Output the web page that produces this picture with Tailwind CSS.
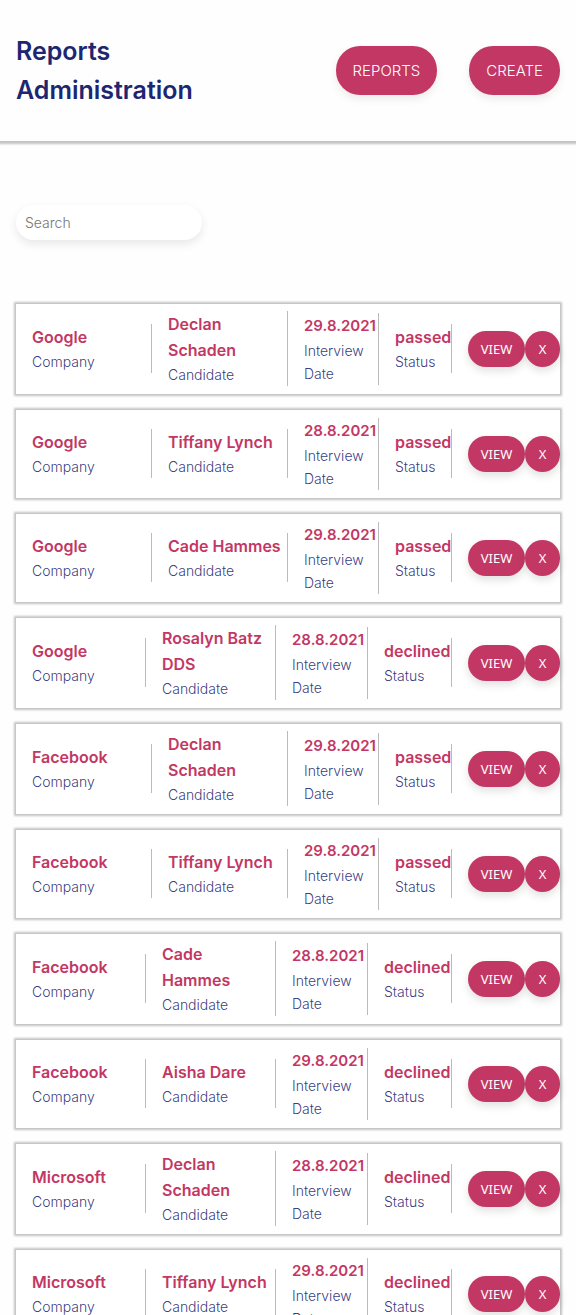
<!DOCTYPE html>
<html lang="en">
<head>
<meta charset="utf-8">
<meta name="viewport" content="width=device-width, initial-scale=1">
<title>Reports Administration</title>
<script src="https://cdn.jsdelivr.net/npm/@tailwindcss/browser@4"></script>
</head>
<body class="bg-[#fefefe] font-['Inter',sans-serif] font-light text-[#1d2671]">
<header class="flex min-h-[141px] items-center justify-between gap-4 px-4 shadow-[0_1px_2px_2px_#c4c4c4]">
  <h1 class="text-[25px]/[39px] font-semibold">Reports<br>Administration</h1>
  <nav class="flex gap-8">
    <a href="#reports" class="rounded-[24px] bg-[#c33764] px-[17px] py-3 text-[15px]/[25px] text-white shadow-[0_4px_8px_rgba(0,0,0,0.08)]">REPORTS</a>
    <a href="#create" class="rounded-[24px] bg-[#c33764] px-[17px] py-3 text-[15px]/[25px] text-white shadow-[0_4px_8px_rgba(0,0,0,0.08)]">CREATE</a>
  </nav>
</header>
<main class="px-4 pt-16">
  <input type="search" aria-label="Search" placeholder="Search" class="block h-[35px] w-[186px] rounded-full bg-white px-[9px] text-sm font-light placeholder:text-[#757575] shadow-[0_4px_10px_rgba(0,0,0,0.09)]">
  <ul id="reports" class="mt-16 flex flex-col gap-4 pb-4"></ul>
</main>
<script>
const reports = [
  ['Google', 'Declan Schaden', '29.8.2021', 'passed'],
  ['Google', 'Tiffany Lynch', '28.8.2021', 'passed'],
  ['Google', 'Cade Hammes', '29.8.2021', 'passed'],
  ['Google', 'Rosalyn Batz DDS', '28.8.2021', 'declined'],
  ['Facebook', 'Declan Schaden', '29.8.2021', 'passed'],
  ['Facebook', 'Tiffany Lynch', '29.8.2021', 'passed'],
  ['Facebook', 'Cade Hammes', '28.8.2021', 'declined'],
  ['Facebook', 'Aisha Dare', '29.8.2021', 'declined'],
  ['Microsoft', 'Declan Schaden', '28.8.2021', 'declined'],
  ['Microsoft', 'Tiffany Lynch', '29.8.2021', 'declined'],
];
const columns = {
  passed: 'grid-cols-[1fr_1fr_75px_57px_auto]',
  declined: 'grid-cols-[1fr_1fr_76px_68px_auto]',
};
const cell = (value, label, valueStyle) => `
  <div class="border-r border-[#bbbbbb]">
    <h2 class="${valueStyle} font-semibold text-[#c33764]">${value}</h2>
    <p class="text-sm/[23px] text-[#1d2671]/90">${label}</p>
  </div>`;
document.getElementById('reports').innerHTML = reports.map(([company, name, date, status]) => `
  <li class="grid ${columns[status]} min-h-[88px] items-center gap-x-4 bg-white pt-[7px] pb-2 pl-4 shadow-[0_0_2px_2px_#c4c4c4]">
    ${cell(company, 'Company', 'text-base/[26px]')}
    ${cell(name, 'Candidate', 'pr-[3px] text-base/[26px]')}
    ${cell(date, 'Interview Date', 'text-[15px]/[26px]')}
    ${cell(status, 'Status', 'text-base/[26px]')}
    <div class="flex font-['Noto_Sans',sans-serif] text-[13px]/[18px] font-normal text-white">
      <button type="button" class="h-9 w-[57px] rounded-full bg-[#c33764] shadow-[0_4px_8px_rgba(0,0,0,0.12)]">VIEW</button>
      <button type="button" class="h-9 w-[35px] rounded-full bg-[#c33764] shadow-[0_4px_8px_rgba(0,0,0,0.12)]">X</button>
    </div>
  </li>`).join('');
</script>
</body>
</html>
